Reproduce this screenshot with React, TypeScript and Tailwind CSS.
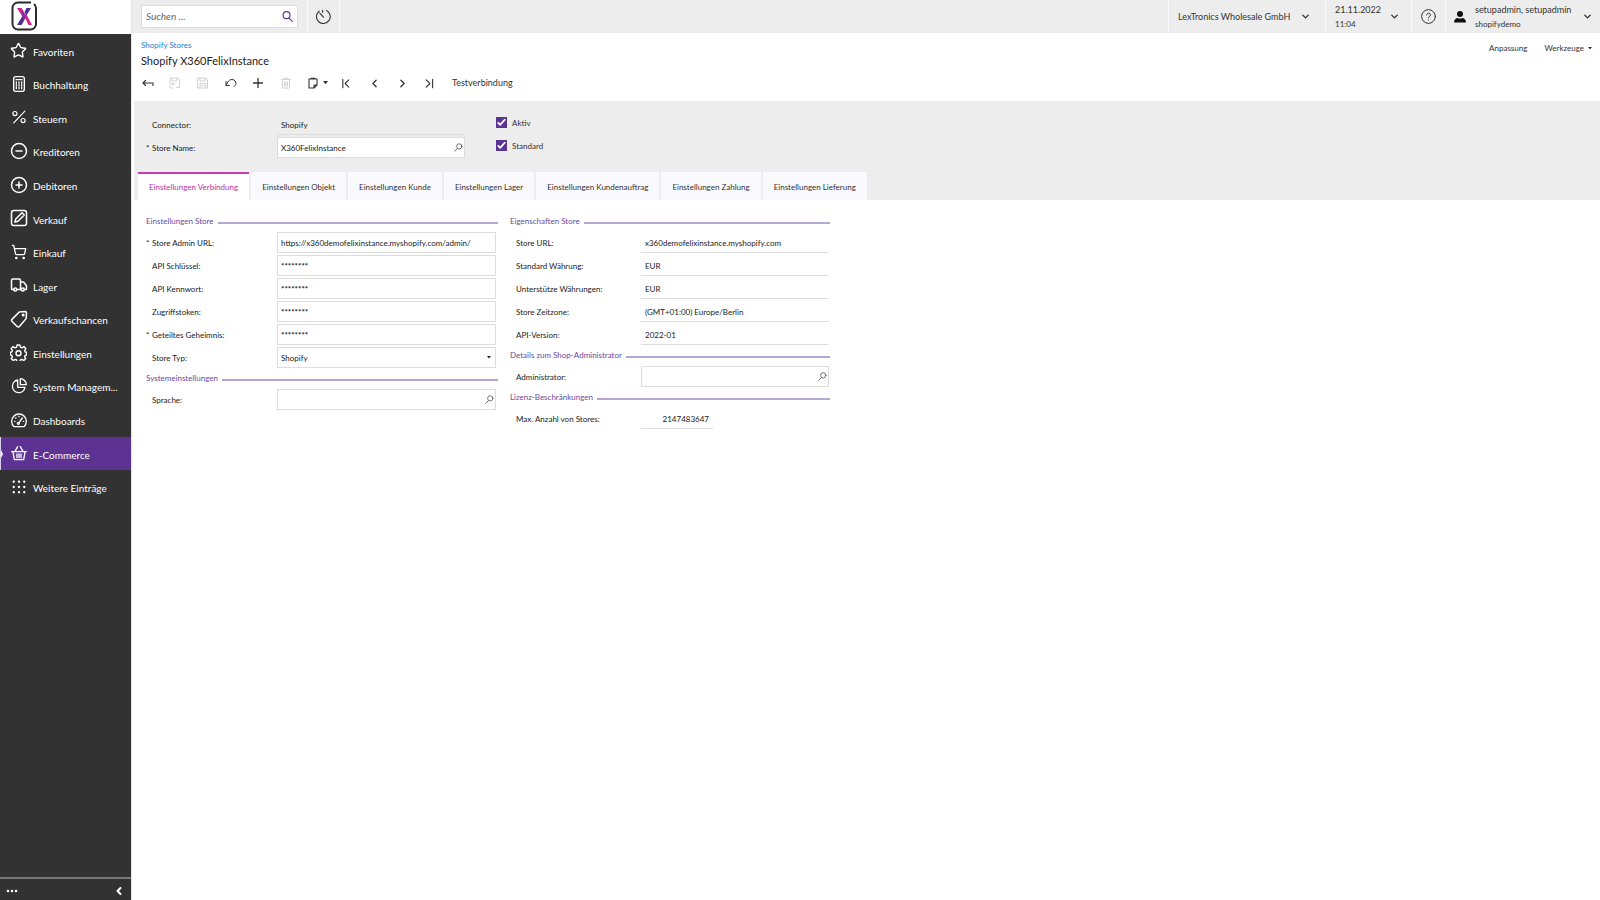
import React from 'react';
import { ChevronDown, ChevronLeft, ChevronRight, CircleMinus, CirclePlus, ShoppingCart, Star, Truck } from 'lucide-react';

type IconProps = { children: React.ReactNode; className?: string; stroke?: number };

const Icon: React.FC<IconProps> = ({ children, className = 'size-4', stroke = 2 }) => (
  <svg
    viewBox="0 0 24 24"
    fill="none"
    stroke="currentColor"
    strokeWidth={stroke}
    strokeLinecap="round"
    strokeLinejoin="round"
    className={className}
    aria-hidden="true"
  >
    {children}
  </svg>
);

const Caret: React.FC<{ className?: string }> = ({ className = 'w-1.5' }) => (
  <svg viewBox="0 0 8 5" fill="currentColor" className={className} aria-hidden="true">
    <path d="M0 0h8L4 5z" />
  </svg>
);

const navItems = [
  { label: 'Favoriten', icon: <Star size={17} /> },
  {
    label: 'Buchhaltung',
    icon: (
      <Icon>
        <rect x="4" y="1" width="16" height="22" rx="3" />
        <path d="M7.500 5.500h9" />
        <path d="M8 9v11M12 9v11M16 9v11" strokeDasharray="2 2" />
      </Icon>
    ),
  },
  {
    label: 'Steuern',
    icon: (
      <Icon className="size-[14px]">
        <path d="M22 2 3 22" />
        <circle cx="5" cy="6" r="3.500" />
        <circle cx="19" cy="18" r="3.500" />
      </Icon>
    ),
  },
  { label: 'Kreditoren', icon: <CircleMinus size={18} /> },
  { label: 'Debitoren', icon: <CirclePlus size={18} /> },
  {
    label: 'Verkauf',
    icon: (
      <Icon className="size-[18px]">
        <rect x="2" y="2" width="20" height="20" rx="3" />
        <path d="m6.500 17.500 1.200-4.200L16 5l3 3-8.300 8.300z" />
      </Icon>
    ),
  },
  { label: 'Einkauf', icon: <ShoppingCart size={16} /> },
  { label: 'Lager', icon: <Truck size={18} /> },
  {
    label: 'Verkaufschancen',
    icon: (
      <Icon className="size-[18px]">
        <path d="M12.500 2.500 20 2a2 2 0 0 1 2 2l-.5 7.500-9 10.500a2 2 0 0 1-3 0L2.500 15a2 2 0 0 1 0-2.500z" />
        <circle cx="17.500" cy="6.500" r="1" />
      </Icon>
    ),
  },
  {
    label: 'Einstellungen',
    icon: (
      <Icon className="size-[17px]">
        <path d="M10 1.500h4l.7 3 2.100.9 2.700-1.700 2.800 2.800-1.700 2.700.9 2.100 1.900.4v3.800l-1.900.4-.9 2.100 1.700 2.600-2.800 2.800-2.700-1.700-2.100.9-.7 2.500h-4l-.7-2.500-2.100-.9-2.700 1.700-2.800-2.800 1.700-2.600-.9-2.100-1.900-.4v-3.800l1.900-.4.9-2.100-1.700-2.700 2.800-2.800 2.700 1.700 2.100-.9z" />
        <circle cx="12" cy="13" r="3.500" />
      </Icon>
    ),
  },
  {
    label: 'System Managem...',
    icon: (
      <Icon>
        <path d="M10 3a9.500 9.500 0 1 0 11 11H10z" />
        <path d="M14 1v9h9a9 9 0 0 0-9-9z" />
      </Icon>
    ),
  },
  {
    label: 'Dashboards',
    icon: (
      <Icon>
        <path d="M4.500 22a11 11 0 1 1 15 0z" />
        <path d="m12 16 5-7M5.500 14h.5M7 9h.5M12 6.500v.5M18.500 14h.5" />
        <circle cx="11" cy="17" r="1.500" />
      </Icon>
    ),
  },
  {
    label: 'E-Commerce',
    active: true,
    icon: (
      <Icon>
        <path d="M1 10h22M3 10.500 5 22h14l2-11.500M6 9.500l4-7M18 9.500l-4-7M9 13.500V19M12 13.500V19M15 13.500V19" />
      </Icon>
    ),
  },
  {
    label: 'Weitere Einträge',
    icon: (
      <Icon className="size-[14px]" stroke={4}>
        <path d="M3 3h.01M12 3h.01M21 3h.01M3 12h.01M12 12h.01M21 12h.01M3 21h.01M12 21h.01M21 21h.01" />
      </Icon>
    ),
  },
];

const tabs = [
  'Einstellungen Verbindung',
  'Einstellungen Objekt',
  'Einstellungen Kunde',
  'Einstellungen Lager',
  'Einstellungen Kundenauftrag',
  'Einstellungen Zahlung',
  'Einstellungen Lieferung',
];

const Logo: React.FC = () => (
  <svg viewBox="0 0 27 30" className="h-[30px] w-[27px]" aria-label="Logo">
    <path
      d="M20 1.500H7A5.500 5.500 0 0 0 1.500 7v16A5.500 5.500 0 0 0 7 28.500h12.500A5.500 5.500 0 0 0 25 23V7a5.500 5.500 0 0 0-2-4"
      fill="none"
      stroke="#2b2b2b"
      strokeWidth="2"
    />
    <path d="M6 7h4.500l4 6.500-2.500 3z" fill="#d0228f" />
    <path d="M15.500 7H20l-4.500 7.500-2-3.500z" fill="#4c2f92" />
    <path d="M6 24h4.500l3-5-2-4z" fill="#4c2f92" />
    <path d="m13 14.500 2.500-1L21 24h-3.500z" fill="#d0228f" />
    <path d="m10.500 7 2 5 3 2.500-2 4.500-2-2.500z" fill="#8a2a94" />
  </svg>
);

const Sidebar: React.FC = () => (
  <aside className="flex w-[131px] shrink-0 flex-col bg-[#323232] text-white">
    <div className="flex h-[34px] items-center bg-white pb-0.5 pl-[11px]">
      <Logo />
    </div>
    <nav>
      <ul className="grid h-[470px] auto-rows-fr">
        {navItems.map((item) => (
          <li key={item.label} className={item.active ? 'relative bg-[#5c3393]' : ''}>
            {item.active && (
              <span className="absolute inset-y-0 left-0 flex items-center border-l border-[#d9cfe8]">
                <span className="border-y-4 border-l-2 border-y-transparent border-l-white" />
              </span>
            )}
            <a href="#" className="flex h-full items-center pt-[3px] pl-[9px] text-[10px] whitespace-nowrap">
              <span className="mr-[5px] flex w-[19px] justify-center pb-1">{item.icon}</span>
              {item.label}
            </a>
          </li>
        ))}
      </ul>
    </nav>
    <div className="mt-auto flex h-[23px] items-center justify-between border-t-2 border-[#777] px-1.5 pt-0.5">
      <button aria-label="Mehr">
        <Icon className="size-3" stroke={5}>
          <path d="M4 12h.01M12 12h.01M20 12h.01" />
        </Icon>
      </button>
      <button aria-label="Menü einklappen">
        <ChevronLeft size={12} strokeWidth={4} />
      </button>
    </div>
  </aside>
);

const TopBar: React.FC = () => (
  <header className="flex h-[33px] items-stretch bg-[#ededee] text-[#333]">
    <form className="flex items-center px-[9px]">
      <div className="flex h-[23px] w-[157px] items-center border border-[#ddd] bg-white px-1">
        <input
          type="search"
          aria-label="Suchen"
          placeholder="Suchen ..."
          className="w-full min-w-0 flex-1 text-[10px] italic outline-none placeholder:text-[#666]"
        />
        <button type="button" aria-label="Suche starten" className="text-[#5c3393]">
          <Icon className="size-[11px]" stroke={2.5}>
            <circle cx="10" cy="9" r="7.500" />
            <path d="m15.500 15.500 7 7" />
          </Icon>
        </button>
      </div>
    </form>
    <button aria-label="Verlauf" className="flex w-[33px] items-center justify-center border-x border-[#f8f8fa]">
      <Icon className="size-[15px]" stroke={1.8}>
        <path d="M17 2.500A11 11 0 1 1 5 3.500M12 13 6 6.500M10.500 2v3" />
      </Icon>
    </button>
    <button className="ml-auto flex w-[157px] items-center justify-between border-l border-[#f8f8fa] pr-[14px] pl-[9px] text-[9px]">
      LexTronics Wholesale GmbH
      <ChevronDown size={11} strokeWidth={3} />
    </button>
    <button className="flex w-[86px] items-center justify-between border-l border-[#f8f8fa] pr-[11px] pl-[9px] text-left">
      <span>
        <span className="block text-[9px] leading-3">21.11.2022</span>
        <span className="block pt-0.5 text-[8px] leading-3">11:04</span>
      </span>
      <ChevronDown size={11} strokeWidth={3} />
    </button>
    <button aria-label="Hilfe" className="flex w-[35px] items-center justify-center border-x border-[#f8f8fa]">
      <Icon className="size-[15px]" stroke={1.6}>
        <circle cx="12" cy="12" r="11" />
        <path d="M9 9.500a3 3 0 1 1 4.500 2.600c-1 .6-1.500 1-1.500 2.200M12 17.500v.1" />
      </Icon>
    </button>
    <button className="flex w-[154px] items-center pr-[7px] pl-2 text-left">
      <svg viewBox="0 0 24 24" fill="#111" className="mr-[9px] size-3" aria-hidden="true">
        <circle cx="12" cy="6" r="6" />
        <path d="M0 23c0-6 4-9 7-9 3 1.500 7 1.500 10 0 3 0 7 3 7 9z" />
      </svg>
      <span>
        <span className="block text-[9px] leading-3">setupadmin, setupadmin</span>
        <span className="block pt-0.5 text-[8px] leading-3">shopifydemo</span>
      </span>
      <ChevronDown size={11} strokeWidth={3} className="ml-auto" />
    </button>
  </header>
);

const Toolbar: React.FC = () => (
  <div className="flex h-6 items-center text-[#333]">
    <button aria-label="Zurück" className="w-[27px]">
      <Icon className="size-3" stroke={2.2}>
        <path d="M22 17v-5H2M7 7l-5 5 5 5" />
      </Icon>
    </button>
    <button aria-label="Speichern und schließen" className="w-[28px] text-[#d2d2d2]" disabled>
      <Icon className="size-3">
        <path d="M2 14V2h15l4 4v15h-6M6 2v6h10V2M9 22H2v-5M12 14H5M8 11l-3 3 3 3" />
      </Icon>
    </button>
    <button aria-label="Speichern" className="w-[28px] text-[#d2d2d2]" disabled>
      <Icon className="size-3">
        <path d="M2 2h15l4 4v16H2zM6 2v6h10V2M6 22v-9h12v9M9 17h6" />
      </Icon>
    </button>
    <button aria-label="Rückgängig" className="w-[27px]">
      <Icon className="size-3">
        <path d="M2 9v8h7M2.500 16.500C5 9 9 5 14 5c5 0 8 4 8 8 0 3-2 5-4 6" />
      </Icon>
    </button>
    <button aria-label="Neu" className="w-[28px]">
      <Icon className="size-3" stroke={2.6}>
        <path d="M12 3v18M3 12h18" />
      </Icon>
    </button>
    <button aria-label="Löschen" className="w-[27px] text-[#d2d2d2]" disabled>
      <Icon className="size-3">
        <path d="M3 5h18M8 5V2h8v3M5 5v17h14V5M9 10v8M12 10v8M15 10v8" />
      </Icon>
    </button>
    <button aria-label="Zwischenablage" className="flex w-[34px] items-center gap-1">
      <Icon className="size-3" stroke={2.2}>
        <path d="M4 4h16v12l-6 6H4zM20 16h-6v6M8 2.500h8" />
      </Icon>
      <Caret className="w-[5px]" />
    </button>
    <button aria-label="Erster Datensatz" className="w-[27px]">
      <Icon className="size-[11px]" stroke={2.4}>
        <path d="M4 3v18M17 4l-8 8 8 8" />
      </Icon>
    </button>
    <button aria-label="Vorheriger Datensatz" className="w-[28px]">
      <ChevronLeft size={13} strokeWidth={2.4} />
    </button>
    <button aria-label="Nächster Datensatz" className="w-[27px]">
      <ChevronRight size={13} strokeWidth={2.4} />
    </button>
    <button aria-label="Letzter Datensatz" className="w-[29px]">
      <Icon className="size-[11px]" stroke={2.4}>
        <path d="M21 3v18M7 4l8 8-8 8" />
      </Icon>
    </button>
    <button className="text-[9px]">Testverbindung</button>
  </div>
);

const Lens: React.FC = () => (
  <Icon className="size-[9px]" stroke={2.2}>
    <circle cx="14" cy="9" r="7" />
    <path d="m9 15-7 7" />
  </Icon>
);

const SectionTitle: React.FC<{ children: React.ReactNode }> = ({ children }) => (
  <h2 className="flex h-[19px] items-center gap-1 pb-0.5 text-[8px] text-[#6b4a9e]">
    {children}
    <span className="mt-1 h-0.5 flex-1 bg-[#b3a6cf]" />
  </h2>
);

type FieldProps = {
  id: string;
  label: string;
  value?: string;
  required?: boolean;
  kind?: 'text' | 'secret' | 'lookup' | 'select' | 'readonly' | 'number';
};

const Field: React.FC<FieldProps> = ({ id, label, value = '', required, kind = 'text' }) => {
  const readOnly = kind === 'readonly' || kind === 'number';
  return (
    <div className="flex h-[23px] items-center text-[8px] text-[#222]">
      <label htmlFor={id} className="flex w-[131px] shrink-0">
        <span className="w-1.5">{required && '*'}</span>
        {label}
      </label>
      {kind === 'select' ? (
        <div className="flex h-[21px] flex-1 items-center border border-[#ddd] bg-white pr-1">
          <select id={id} className="h-full flex-1 appearance-none pl-[3px] outline-none">
            <option>{value}</option>
          </select>
          <Caret className="w-1" />
        </div>
      ) : readOnly ? (
        <input
          id={id}
          readOnly
          defaultValue={value}
          className={
            kind === 'number'
              ? 'h-[21px] w-[72px] border-b border-[#ddd] px-1 pt-px text-right outline-none'
              : 'h-[21px] min-w-0 flex-1 border-b border-[#ddd] px-1 pt-px outline-none'
          }
        />
      ) : (
        <div className="flex h-[21px] min-w-0 flex-1 items-center border border-[#ddd] bg-white">
          <input
            id={id}
            defaultValue={value}
            className={
              kind === 'secret'
                ? 'h-full min-w-0 flex-1 pl-[3px] font-bold outline-none'
                : 'h-full min-w-0 flex-1 pl-[3px] outline-none'
            }
          />
          {kind === 'lookup' && (
            <button type="button" aria-label={`${label} suchen`} className="pr-px text-[#555]">
              <Lens />
            </button>
          )}
        </div>
      )}
    </div>
  );
};

const Checkbox: React.FC<{ label: string }> = ({ label }) => (
  <label className="flex h-[23px] items-center gap-[5px] text-[8px]">
    <span className="grid">
      <input
        type="checkbox"
        defaultChecked
        className="peer col-start-1 row-start-1 size-[11px] appearance-none border border-[#5c3393] bg-white checked:bg-[#5c3393]"
      />
      <Icon
        className="pointer-events-none invisible col-start-1 row-start-1 size-[11px] text-white peer-checked:visible"
        stroke={4}
      >
        <path d="m5 13 4 4L19 6" />
      </Icon>
    </span>
    {label}
  </label>
);

const App: React.FC = () => (
  <div className="flex min-h-screen bg-white font-['Lato',sans-serif] text-[#333]">
    <Sidebar />
    <div className="min-w-0 flex-1 border-l border-[#e4e4e4]">
      <TopBar />
      <div className="flex justify-between pl-[9px]">
        <div>
          <a href="#" className="block pt-1 text-[8px] leading-4 text-[#2382d0]">
            Shopify Stores
          </a>
          <h1 className="text-[11px] leading-4 text-[#222]">Shopify X360FelixInstance</h1>
        </div>
        <div className="flex h-[30px] items-center gap-[17px] pr-2 text-[8px]">
          <button>Anpassung</button>
          <button className="flex items-center gap-1">
            Werkzeuge
            <Caret className="w-1" />
          </button>
        </div>
      </div>
      <div className="pt-0.5 pb-1.5 pl-[10px]">
        <Toolbar />
      </div>
      <main className="pl-[2px]">
        <section className="bg-[#ededee] pt-3">
          <div className="flex gap-[31px] pl-3">
            <div className="w-[319px]">
              <Field id="connector" label="Connector:" value="Shopify" kind="readonly" />
              <Field id="store-name" label="Store Name:" value="X360FelixInstance" kind="lookup" required />
            </div>
            <div className="-mt-0.5">
              <Checkbox label="Aktiv" />
              <Checkbox label="Standard" />
            </div>
          </div>
          <div role="tablist" className="mt-[13px] flex gap-0.5 pl-1 text-[8px]">
            {tabs.map((tab, i) => (
              <button
                key={tab}
                role="tab"
                aria-selected={i === 0}
                className={
                  i === 0
                    ? 'h-7 border-t-2 border-[#c540ae] bg-white px-[11px] text-[#b4319f]'
                    : 'h-7 border-t-2 border-[#faf9fd] bg-[#faf9fd] px-[11px]'
                }
              >
                {tab}
              </button>
            ))}
          </div>
        </section>
        <form className="flex gap-3 pt-3 pl-3">
          <div className="w-[352px]">
            <SectionTitle>Einstellungen Store</SectionTitle>
            <div className="pr-0.5">
              <Field
                id="admin-url"
                label="Store Admin URL:"
                value="https://x360demofelixinstance.myshopify.com/admin/"
                required
              />
              <Field id="api-key" label="API Schlüssel:" value="********" kind="secret" />
              <Field id="api-password" label="API Kennwort:" value="********" kind="secret" />
              <Field id="token" label="Zugriffstoken:" value="********" kind="secret" />
              <Field id="secret" label="Geteiltes Geheimnis:" value="********" kind="secret" required />
              <Field id="store-type" label="Store Typ:" value="Shopify" kind="select" />
            </div>
            <SectionTitle>Systemeinstellungen</SectionTitle>
            <div className="pr-0.5">
              <Field id="language" label="Sprache:" kind="lookup" />
            </div>
          </div>
          <div className="w-[320px]">
            <SectionTitle>Eigenschaften Store</SectionTitle>
            <div className="pr-px">
              <Field id="store-url" label="Store URL:" value="x360demofelixinstance.myshopify.com" kind="readonly" />
              <Field id="currency" label="Standard Währung:" value="EUR" kind="readonly" />
              <Field id="currencies" label="Unterstütze Währungen:" value="EUR" kind="readonly" />
              <Field id="timezone" label="Store Zeitzone:" value="(GMT+01:00) Europe/Berlin" kind="readonly" />
              <Field id="api-version" label="API-Version:" value="2022-01" kind="readonly" />
            </div>
            <SectionTitle>Details zum Shop-Administrator</SectionTitle>
            <div className="pr-px">
              <Field id="administrator" label="Administrator:" kind="lookup" />
            </div>
            <SectionTitle>Lizenz-Beschränkungen</SectionTitle>
            <Field id="max-stores" label="Max. Anzahl von Stores:" value="2147483647" kind="number" />
          </div>
        </form>
      </main>
    </div>
  </div>
);

export default App;
